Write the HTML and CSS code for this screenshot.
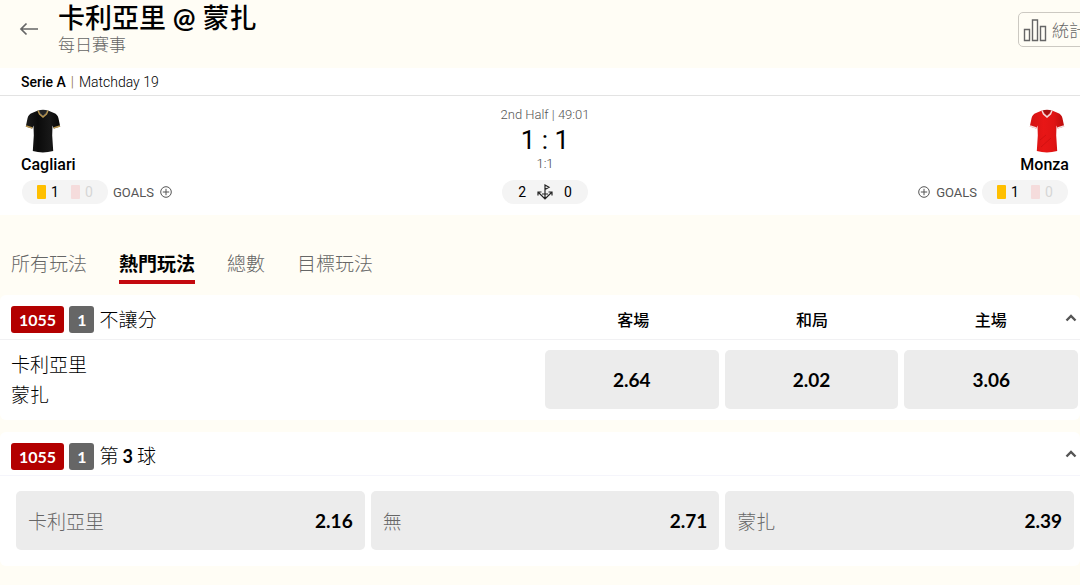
FILE: index.html
```html
<!DOCTYPE html>
<html lang="zh-Hant">
<head>
<meta charset="utf-8">
<meta name="viewport" content="width=device-width, initial-scale=1">
<title>卡利亞里 @ 蒙扎</title>
<link rel="stylesheet" href="styles.css">
</head>
<body>
<svg class="defs" width="0" height="0" aria-hidden="true">
  <defs>
    <linearGradient id="black-cloth" x1="0" x2="1" y1="0" y2="0">
      <stop offset="0" stop-color="#1c1c1c"/><stop offset=".35" stop-color="#0b0b0b"/><stop offset=".7" stop-color="#181818"/><stop offset="1" stop-color="#050505"/>
    </linearGradient>
    <linearGradient id="red-cloth" x1="0" x2="1" y1="0" y2="0">
      <stop offset="0" stop-color="#d31313"/><stop offset=".4" stop-color="#e81616"/><stop offset=".7" stop-color="#e01414"/><stop offset="1" stop-color="#bb0c0c"/>
    </linearGradient>
    <symbol id="plus-circle" viewBox="0 0 12 12">
      <circle cx="6" cy="6" r="5.3" fill="none" stroke="currentColor"/>
      <path d="M6 2.8v6.4M2.8 6h6.4" stroke="currentColor"/>
    </symbol>
    <symbol id="chevron-up" viewBox="0 0 12 8">
      <path d="M1.500 6.500 6 2l4.500 4.500" fill="none" stroke="currentColor" stroke-width="2.400"/>
    </symbol>
  </defs>
</svg>

<header class="topbar">
  <button class="back" type="button" aria-label="返回">
    <svg width="20" height="14" viewBox="0 0 20 14"><path d="M19 7H2M7.500 1.500 2 7l5.500 5.500" fill="none" stroke="currentColor" stroke-width="1.700"/></svg>
  </button>
  <div class="heading">
    <h1 class="title">卡利亞里 <b>@</b> 蒙扎</h1>
    <p class="subtitle">每日賽事</p>
  </div>
  <button class="stats" type="button">
    <svg width="24" height="24" viewBox="0 0 24 24"><path d="M1.500 11.500h5v11h-5zM9.500 2h5v20.500h-5zM17.500 8.500h5v14h-5z" fill="none" stroke="currentColor" stroke-width="1.400"/></svg>
    統計
  </button>
</header>

<div class="league"><strong>Serie A</strong><span class="bar">|</span><span>Matchday 19</span></div>

<section class="scoreboard">
  <div class="team">
    <svg class="shirt" width="36" height="44" viewBox="0 0 36 44">
      <path d="M13 1.500 7 4Q3.500 5.300 2.600 9L.8 17.500l6.400 2 1.300-3 .3 10-1 15.500q10 2.800 20.400 0l-1-15.500.3-10 1.300 3 6.400-2L33.400 9Q32.500 5.300 29 4L23 1.500 18 7z" fill="url(#black-cloth)"/>
      <path d="M13 1.500q5-1.500 10 0l-5 5.500z" fill="#242424"/>
      <path d="M13 1.500 14.500 5 18 8l3.500-3L23 1.500" fill="none" stroke="#b7954f" stroke-width="1.400"/>
      <path d="m1 17 6.300 2M35 17l-6.300 2" stroke="#b7954f" stroke-width="1.500"/>
    </svg>
    <h2 class="team-name">Cagliari</h2>
    <div class="team-info">
      <div class="pill cards"><i class="card yellow"></i><span>1</span><i class="card red"></i><span class="muted">0</span></div>
      <button class="goals" type="button">GOALS <svg width="12" height="12"><use href="#plus-circle"/></svg></button>
    </div>
  </div>

  <div class="score">
    <div class="clock">2nd Half | 49:01</div>
    <div class="result">1 : 1</div>
    <div class="half">1:1</div>
    <div class="pill corners">
      <span>2</span>
      <svg width="16" height="18" viewBox="0 0 16 18"><path d="M8 16V2l4 2.300L8 6.500M1 9l7 7 7-7M1 12.500V9h3.500M15 12.500V9h-3.500M5 11h6" fill="none" stroke="#222" stroke-width="1.200"/></svg>
      <span>0</span>
    </div>
  </div>

  <div class="team away">
    <svg class="shirt" width="36" height="44" viewBox="0 0 36 44">
      <path d="M13 1.500 7 4Q3.500 5.300 2.600 9L.8 17.500l6.400 2 1.300-3 .3 10-1 15.500q10 2.800 20.400 0l-1-15.500.3-10 1.300 3 6.400-2L33.400 9Q32.500 5.300 29 4L23 1.500 18 7z" fill="url(#red-cloth)"/>
      <path d="M13 1.500q5-1.500 10 0l-5 5.500z" fill="#a61111"/>
      <path d="M13 1.500 14.500 5 18 8l3.500-3L23 1.500" fill="none" stroke="#f3dcdc" stroke-width="1.400"/>
      <path d="m1 17 6.300 2M35 17l-6.300 2" stroke="#f3dcdc" stroke-width="1.500"/>
      <path d="m12 38 10-9M11 31l6-5" fill="none" stroke="#cf1010" stroke-width=".9"/>
    </svg>
    <h2 class="team-name">Monza</h2>
    <div class="team-info">
      <button class="goals" type="button"><svg width="12" height="12"><use href="#plus-circle"/></svg> GOALS</button>
      <div class="pill cards"><i class="card yellow"></i><span>1</span><i class="card red"></i><span class="muted">0</span></div>
    </div>
  </div>
</section>

<nav class="tabs">
  <a class="tab" href="#all">所有玩法</a>
  <a class="tab active" href="#popular" aria-current="page">熱門玩法</a>
  <a class="tab" href="#totals">總數</a>
  <a class="tab" href="#goals">目標玩法</a>
</nav>

<main class="markets">
  <section class="market">
    <div class="market-head">
      <span class="tag code">1055</span><span class="tag count">1</span>
      <h3 class="market-name">不讓分</h3>
      <div class="columns"><span>客場</span><span>和局</span><span>主場</span></div>
      <button class="collapse" type="button" aria-label="收合"><svg width="12" height="8"><use href="#chevron-up"/></svg></button>
    </div>
    <div class="match-row">
      <div class="sides"><div>卡利亞里</div><div>蒙扎</div></div>
      <div class="odds">
        <button class="odd" type="button">2.64</button>
        <button class="odd" type="button">2.02</button>
        <button class="odd" type="button">3.06</button>
      </div>
    </div>
  </section>

  <section class="market">
    <div class="market-head compact">
      <span class="tag code">1055</span><span class="tag count">1</span>
      <h3 class="market-name">第<b>3</b>球</h3>
      <button class="collapse" type="button" aria-label="收合"><svg width="12" height="8"><use href="#chevron-up"/></svg></button>
    </div>
    <div class="options">
      <button class="odd option" type="button"><span class="option-name">卡利亞里</span>2.16</button>
      <button class="odd option" type="button"><span class="option-name">無</span>2.71</button>
      <button class="odd option" type="button"><span class="option-name">蒙扎</span>2.39</button>
    </div>
  </section>
</main>
</body>
</html>
```

FILE: styles.css
```css
* { box-sizing: border-box; }

body {
  margin: 0;
  overflow-x: hidden;
  background: #fffdf5;
  color: #000;
  font-family: Lato, "Noto Sans CJK TC", sans-serif;
  font-size: 19px;
}

h1, h2, h3, p { margin: 0; }

button {
  margin: 0;
  padding: 0;
  border: 0;
  background: none;
  color: inherit;
  font: inherit;
  cursor: pointer;
}

svg { display: block; flex: none; }
.defs { position: absolute; }

.topbar {
  display: flex;
  align-items: flex-start;
  height: 68px;
  padding-left: 19px;
}

.back { margin-top: 22px; color: #666; }
.heading { flex: 1; padding: 2px 0 0 19px; }

.title {
  font-size: 27px;
  font-weight: 500;
  line-height: 32px;
}

.subtitle {
  color: #666;
  font-size: 17px;
  font-weight: 300;
  line-height: 22px;
}

.stats {
  display: flex;
  flex: none;
  align-items: center;
  gap: 5px;
  height: 35px;
  margin: 12px -17px 0 0;
  padding: 0 10px 0 4px;
  border: 1px solid #ccc9c2;
  border-radius: 5px;
  color: #666;
  font-size: 17px;
  font-weight: 300;
}

.league {
  display: flex;
  gap: 5px;
  height: 28px;
  padding: 0 21px;
  border-bottom: 1px solid #e3e3e3;
  background: #fff;
  font: 300 14px/28px Roboto, sans-serif;
}

.league strong { font-weight: 500; }
.bar { color: #8a6a30; }

.scoreboard {
  display: grid;
  grid-template-columns: 1fr auto 1fr;
  padding: 12px 11px 11px 21px;
  background: #fff;
  font-family: Roboto, sans-serif;
}

.team { display: flex; flex-direction: column; align-items: flex-start; }
.away { align-items: flex-end; }
.shirt { margin: 1px 4px 0; }

.team-name {
  font-size: 16px;
  font-weight: 500;
  line-height: 24px;
}

.team-info {
  display: flex;
  align-items: center;
  gap: 5px;
  margin: 3px 1px 0;
}

.pill {
  display: flex;
  align-items: center;
  height: 24px;
  border-radius: 12px;
  background: #f4f4f4;
  font-size: 14px;
}

.cards { gap: 5px; width: 86px; padding-left: 15px; }
.card { width: 9px; height: 14px; border-radius: 1px; }
.yellow { background: #ffbf00; }
.red { margin-left: 7px; background: #f5dcdc; }
.muted { color: #d6d6d6; }

.goals {
  display: flex;
  align-items: center;
  gap: 6px;
  color: #555;
  font-size: 13px;
}

.score { display: flex; flex-direction: column; align-items: center; }
.clock { color: #555; font-size: 13px; font-weight: 300; line-height: 14px; }
.result { font-size: 26px; line-height: 36px; }
.half { color: #444; font-size: 13px; font-weight: 300; line-height: 12px; }
.corners { justify-content: center; gap: 11px; width: 86px; margin-top: 10px; }

.tabs { display: flex; gap: 32px; padding: 35px 11px 11px; }

.tab {
  padding-bottom: 2px;
  border-bottom: 4px solid transparent;
  color: #666;
  font-weight: 300;
  line-height: 28px;
  text-decoration: none;
}

.active { border-color: #c4090f; color: #000; font-weight: 700; }

.markets { display: grid; gap: 12px; }
.market { border-radius: 6px; background: #fff; }

.market-head {
  display: flex;
  align-items: center;
  gap: 5px;
  height: 45px;
  padding: 5px 3px 0 11px;
  border-bottom: 1px solid #f1f1f3;
}

.compact { height: 44px; border-color: #f5f5fb; }

.tag {
  padding: 0 8px;
  border-radius: 3px;
  color: #fff;
  font-size: 16px;
  font-weight: 700;
  line-height: 27px;
}

.code { background: #b30000; }
.count { background: #666; }

.market-name {
  display: flex;
  flex: 1;
  gap: 4px;
  font-size: 19px;
  font-weight: 300;
  line-height: 28px;
}

.market-name b { font-size: 18px; font-weight: 700; }

.columns, .odds {
  display: grid;
  grid-template-columns: repeat(3, 1fr);
  flex: none;
  gap: 6px;
}

.columns {
  width: calc(50vw - 10px);
  margin-right: -17px;
  font-size: 16px;
  font-weight: 500;
  line-height: 24px;
  text-align: center;
}

.odds { width: calc(50vw - 7px); }

.collapse { padding: 4px 0 8px; color: #555; }

.match-row {
  display: flex;
  align-items: flex-start;
  justify-content: space-between;
  padding: 10px 2px;
}

.sides { padding-left: 9px; font-weight: 300; line-height: 30px; }

.odd {
  height: 59px;
  border-radius: 5px;
  background: #ececec;
  font-size: 19px;
  font-weight: 700;
}

.options {
  display: grid;
  grid-template-columns: repeat(3, 1fr);
  gap: 6px;
  padding: 15px 6px 16px 16px;
}

.option {
  display: flex;
  align-items: center;
  justify-content: space-between;
  padding: 0 12px;
}

.option-name { color: #666; font-weight: 300; }
```
